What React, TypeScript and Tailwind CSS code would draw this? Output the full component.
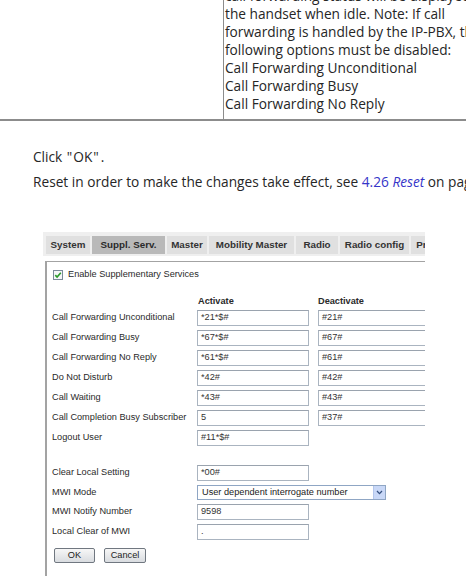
import React from "react";

const docFont = { fontFamily: '"Open Sans", "Noto Sans", sans-serif' };
const uiFont = { fontFamily: '"Liberation Sans", Arial, sans-serif' };

const tabs = [
  { label: "System", w: "w-[44px]" },
  { label: "Suppl. Serv.", w: "w-[73px]", active: true },
  { label: "Master", w: "w-[40px]" },
  { label: "Mobility Master", w: "w-[85px]" },
  { label: "Radio", w: "w-[42px]" },
  { label: "Radio config", w: "w-[69px]" },
  { label: "Provisioning", w: "w-[70px]" },
];

const codeRows: { label: string; on: string; off?: string }[] = [
  { label: "Call Forwarding Unconditional", on: "*21*$#", off: "#21#" },
  { label: "Call Forwarding Busy", on: "*67*$#", off: "#67#" },
  { label: "Call Forwarding No Reply", on: "*61*$#", off: "#61#" },
  { label: "Do Not Disturb", on: "*42#", off: "#42#" },
  { label: "Call Waiting", on: "*43#", off: "#43#" },
  { label: "Call Completion Busy Subscriber", on: "5", off: "#37#" },
  { label: "Logout User", on: "#11*$#" },
];

function Field({ value, w = "w-[112px]" }: { value: string; w?: string }) {
  return (
    <div
      className={`${w} h-[16px] shrink-0 border border-[#aab4c0] border-t-[#9aa3ae] bg-white pl-[3px] flex items-center text-[9.2px] text-[#333] leading-none whitespace-nowrap overflow-hidden`}
    >
      {value}
    </div>
  );
}

function Label({ text }: { text: string }) {
  return (
    <div className="w-[145px] shrink-0 text-[9.2px] text-[#2a2a2a] leading-none whitespace-nowrap">
      {text}
    </div>
  );
}

function CheckBox() {
  return (
    <svg width="10" height="10" viewBox="0 0 10 10" className="shrink-0">
      <rect x="0.5" y="0.5" width="9" height="9" fill="#f4f6f8" stroke="#7a8a99" />
      <path d="M2.3 5.1 L4.1 7 L7.8 2.8" fill="none" stroke="#2a9a2a" strokeWidth="1.6" />
    </svg>
  );
}

function Button({ label, w }: { label: string; w: string }) {
  return (
    <div
      className={`${w} h-[15px] flex items-center justify-center rounded-[2px] border border-[#707780] bg-gradient-to-b from-[#f7f7f7] to-[#d9dce0] text-[9.2px] text-[#222] leading-none`}
    >
      {label}
    </div>
  );
}

export default function App() {
  return (
    <div className="w-[466px] h-[576px] overflow-hidden bg-white text-[#222]">
      {/* table cell with the end of the description */}
      <div className="flex h-[121px] border-b-2 border-[#8c8c8c]">
        <div className="w-[223px] shrink-0" />
        <div className="flex-1 border-l border-[#8c8c8c] overflow-hidden">
          <div
            className="-mt-[13px] pl-[1px] text-[13.7px] leading-[18px] whitespace-nowrap text-[#262626]"
            style={docFont}
          >
            <div>call forwarding status will be displayed on</div>
            <div>the handset when idle. Note: If call</div>
            <div>forwarding is handled by the IP-PBX, the</div>
            <div>following options must be disabled:</div>
            <div>Call Forwarding Unconditional</div>
            <div>Call Forwarding Busy</div>
            <div>Call Forwarding No Reply</div>
          </div>
        </div>
      </div>

      {/* instructions */}
      <div
        className="mt-[23px] pl-[33px] text-[13.7px] leading-[25px] whitespace-nowrap text-[#262626]"
        style={docFont}
      >
        <div>
          Click <span className="mx-[1px]">"</span>OK<span className="ml-[1px] mr-[2px]">"</span>.
        </div>
        <div>
          Reset in order to make the changes take effect, see{" "}
          <span className="text-[#3535c8]">
            4.26 <span className="italic">Reset</span>
          </span>{" "}
          on page
        </div>
      </div>

      {/* web admin form */}
      <div className="mt-[38px] ml-[43px] w-[382px] overflow-hidden" style={uiFont}>
        <div className="h-[24px] bg-[#efefef] flex items-end pb-[2px] pl-[3px] gap-[2px]">
          {tabs.map((t) => (
            <div
              key={t.label}
              className={`${t.w} h-[18px] shrink-0 flex items-center justify-center text-[9.8px] font-bold leading-none whitespace-nowrap ${
                t.active ? "bg-[#b9b9b9] text-[#2a2a2a]" : "bg-[#e0e0e0] text-[#333]"
              }`}
            >
              {t.label}
            </div>
          ))}
        </div>

        <div className="mt-[5px] ml-[2px] h-[400px] border-l-2 border-t border-[#a3a3a3] pl-[5px]">
          <div className="pt-[7px] flex items-center h-[19px] gap-[5px] pl-[1px]">
            <CheckBox />
            <span className="text-[9.2px] text-[#2a2a2a] leading-none whitespace-nowrap">
              Enable Supplementary Services
            </span>
          </div>

          <div className="mt-[15px] h-[12px] flex items-center text-[9.2px] font-bold text-[#2a2a2a] leading-none">
            <div className="w-[146px] shrink-0" />
            <div className="w-[120px] shrink-0">Activate</div>
            <div>Deactivate</div>
          </div>

          <div className="mt-[2px] flex flex-col gap-[4px]">
            {codeRows.map((r) => (
              <div key={r.label} className="flex items-center h-[16px]">
                <Label text={r.label} />
                <Field value={r.on} />
                {r.off && (
                  <div className="ml-[9px]">
                    <Field value={r.off} w="w-[140px]" />
                  </div>
                )}
              </div>
            ))}
          </div>

          <div className="mt-[19px] flex flex-col gap-[4px]">
            <div className="flex items-center h-[16px]">
              <Label text="Clear Local Setting" />
              <Field value="*00#" />
            </div>
            <div className="flex items-center h-[15px]">
              <Label text="MWI Mode" />
              <div className="w-[189px] h-[15px] shrink-0 border border-[#8fa6c4] bg-white flex items-center">
                <span className="flex-1 pl-[4px] text-[9.2px] text-[#222] leading-none whitespace-nowrap overflow-hidden">
                  User dependent interrogate number
                </span>
                <div className="w-[12px] h-[13px] bg-[#c9d8f7] border-l border-[#b3c6ec] flex items-center justify-center">
                  <svg width="7" height="5" viewBox="0 0 7 5">
                    <path d="M1 1 L3.5 3.6 L6 1" fill="none" stroke="#35507f" strokeWidth="1.3" />
                  </svg>
                </div>
              </div>
            </div>
            <div className="flex items-center h-[16px]">
              <Label text="MWI Notify Number" />
              <Field value="9598" />
            </div>
            <div className="flex items-center h-[16px]">
              <Label text="Local Clear of MWI" />
              <Field value="." />
            </div>
          </div>

          <div className="mt-[8px] ml-[2px] flex gap-[9px]">
            <Button label="OK" w="w-[41px]" />
            <Button label="Cancel" w="w-[42px]" />
          </div>
        </div>
      </div>
    </div>
  );
}
